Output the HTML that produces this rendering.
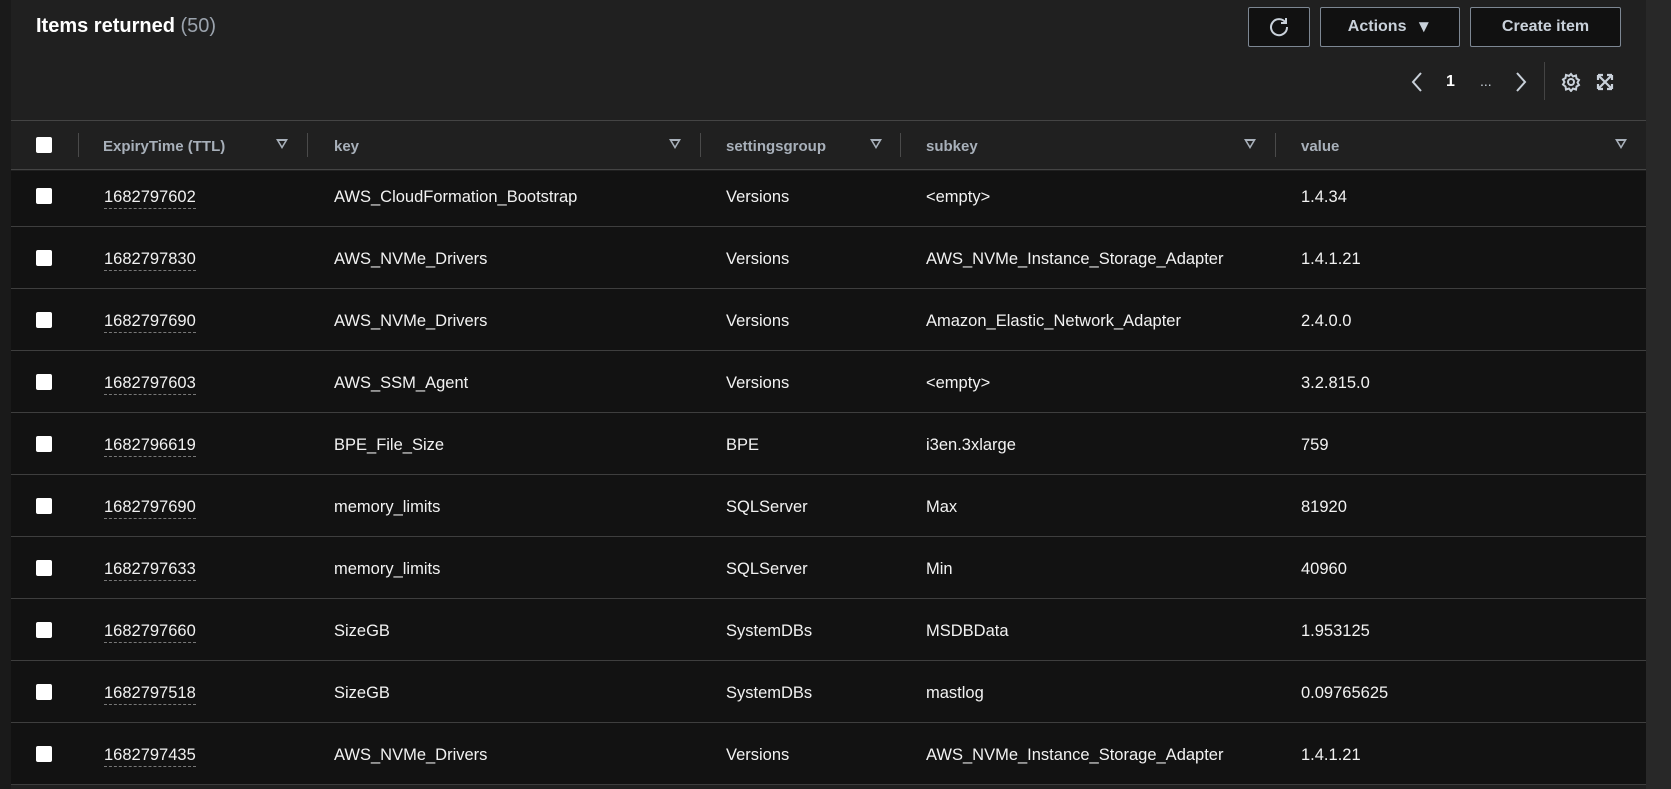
<!DOCTYPE html>
<html><head><meta charset="utf-8"><style>
*{margin:0;padding:0;box-sizing:border-box}
body{width:1671px;height:789px;overflow:hidden;background:#1a1a1a;font-family:"Liberation Sans",sans-serif;position:relative}
#panel{position:absolute;left:11px;top:0;width:1635px;height:789px;background:#202020}
#right{position:absolute;left:1646px;top:0;width:25px;height:789px;background:#282828}
.t{position:absolute;white-space:nowrap}
h1{position:absolute;left:36px;top:15px;font-size:20px;font-weight:bold;color:#fff}
h1 span{font-weight:normal;color:#9ba3ad}
.btn{position:absolute;top:7px;height:40px;border:1px solid #7d8793;border-radius:2px;background:#111;color:#c9d1da;font-weight:bold;font-size:16px;display:flex;align-items:center;justify-content:center}
.hdr{position:absolute;left:11px;top:120px;width:1635px;height:50px;border-top:1px solid #444;border-bottom:1px solid #444}
.hd{position:absolute;top:138px;font-size:15px;font-weight:bold;color:#a8b0ba}
.div{position:absolute;top:133px;width:1px;height:24px;background:#4a4a4a}
.tri{position:absolute;top:139px;width:0;height:0;border-left:6px solid transparent;border-right:6px solid transparent;border-top:10px solid #a8b0ba}
.tri:after{content:"";position:absolute;left:-3px;top:-8px;border-left:3px solid transparent;border-right:3px solid transparent;border-top:5px solid #202020}
.row{position:absolute;left:11px;width:1635px;background:#121212;border-bottom:1px solid #3e3e3e}
.cb{position:absolute;left:36px;width:16px;height:16px;background:#fff;border-radius:2px}
.c{position:absolute;font-size:16.5px;color:#f2f2f2;white-space:nowrap;margin-top:2px}
.n{border-bottom:1px dashed #777;padding-bottom:1px}
</style></head><body>
<div id="panel"></div><div id="right"></div>
<h1>Items returned <span>(50)</span></h1>
<div class="btn" style="left:1248px;width:62px"><svg width="22" height="22" viewBox="0 0 22 22" fill="none" stroke="#c9d1da" stroke-width="2"><path d="M17.5 6.5A8 8 0 1 0 19 11"/><path d="M18 2v5h-5"/></svg></div>
<div class="btn" style="left:1320px;width:140px">Actions&nbsp;&nbsp;<span style="font-size:17px">▼</span></div>
<div class="btn" style="left:1470px;width:151px">Create item</div>
<svg class="t" style="left:1410px;top:71px" width="14" height="22" viewBox="0 0 14 22" fill="none" stroke="#c9d1da" stroke-width="2"><path d="M11 2L3 11l8 9"/></svg>
<div class="t" style="left:1446px;top:73px;font-size:16px;font-weight:bold;color:#fff">1</div>
<div class="t" style="left:1480px;top:73px;font-size:14px;color:#c9d1da">...</div>
<svg class="t" style="left:1514px;top:71px" width="14" height="22" viewBox="0 0 14 22" fill="none" stroke="#c9d1da" stroke-width="2"><path d="M3 2l8 9-8 9"/></svg>
<div class="t" style="left:1544px;top:62px;width:1px;height:38px;background:#444"></div>
<svg class="t" style="left:1561px;top:72px" width="20" height="20" viewBox="0 0 20 20" fill="none" stroke="#c9d1da" stroke-width="2"><circle cx="10" cy="10" r="3"/><path d="M10 2l2 2.5 3-1 .5 3 2.5 1.5-1.5 2.5 1.5 2.5-2.5 1.5-.5 3-3-1-2 2.5-2-2.5-3 1-.5-3L2 12.5 3.5 10 2 7.5 4.5 6l.5-3 3 1z"/></svg>
<svg class="t" style="left:1596px;top:73px" width="18" height="18" viewBox="0 0 18 18" fill="none" stroke="#c9d1da" stroke-width="2.2"><path d="M2 2l14 14M16 2L2 16M2 2h5M2 2v5M16 2h-5M16 2v5M2 16h5M2 16v-5M16 16h-5M16 16v-5"/></svg>
<div class="hdr"></div>
<div class="cb" style="top:137px"></div>
<div class="div" style="left:78px"></div><div class="div" style="left:307px"></div><div class="div" style="left:700px"></div><div class="div" style="left:900px"></div><div class="div" style="left:1275px"></div>
<div class="hd" style="left:103px">ExpiryTime (TTL)</div><div class="tri" style="left:276px"></div>
<div class="hd" style="left:334px">key</div><div class="tri" style="left:669px"></div>
<div class="hd" style="left:726px">settingsgroup</div><div class="tri" style="left:870px"></div>
<div class="hd" style="left:926px">subkey</div><div class="tri" style="left:1244px"></div>
<div class="hd" style="left:1301px">value</div><div class="tri" style="left:1615px"></div>
<div class="row" style="top:171px;height:56px"></div>
<div class="row" style="top:227px;height:62px"></div>
<div class="row" style="top:289px;height:62px"></div>
<div class="row" style="top:351px;height:62px"></div>
<div class="row" style="top:413px;height:62px"></div>
<div class="row" style="top:475px;height:62px"></div>
<div class="row" style="top:537px;height:62px"></div>
<div class="row" style="top:599px;height:62px"></div>
<div class="row" style="top:661px;height:62px"></div>
<div class="row" style="top:723px;height:62px"></div>

<div class="cb" style="top:188px"></div><div class="c n" style="left:104px;top:186px">1682797602</div><div class="c" style="left:334px;top:186px">AWS_CloudFormation_Bootstrap</div><div class="c" style="left:726px;top:186px">Versions</div><div class="c" style="left:926px;top:186px">&lt;empty&gt;</div><div class="c" style="left:1301px;top:186px">1.4.34</div>
<div class="cb" style="top:250px"></div><div class="c n" style="left:104px;top:248px">1682797830</div><div class="c" style="left:334px;top:248px">AWS_NVMe_Drivers</div><div class="c" style="left:726px;top:248px">Versions</div><div class="c" style="left:926px;top:248px">AWS_NVMe_Instance_Storage_Adapter</div><div class="c" style="left:1301px;top:248px">1.4.1.21</div>
<div class="cb" style="top:312px"></div><div class="c n" style="left:104px;top:310px">1682797690</div><div class="c" style="left:334px;top:310px">AWS_NVMe_Drivers</div><div class="c" style="left:726px;top:310px">Versions</div><div class="c" style="left:926px;top:310px">Amazon_Elastic_Network_Adapter</div><div class="c" style="left:1301px;top:310px">2.4.0.0</div>
<div class="cb" style="top:374px"></div><div class="c n" style="left:104px;top:372px">1682797603</div><div class="c" style="left:334px;top:372px">AWS_SSM_Agent</div><div class="c" style="left:726px;top:372px">Versions</div><div class="c" style="left:926px;top:372px">&lt;empty&gt;</div><div class="c" style="left:1301px;top:372px">3.2.815.0</div>
<div class="cb" style="top:436px"></div><div class="c n" style="left:104px;top:434px">1682796619</div><div class="c" style="left:334px;top:434px">BPE_File_Size</div><div class="c" style="left:726px;top:434px">BPE</div><div class="c" style="left:926px;top:434px">i3en.3xlarge</div><div class="c" style="left:1301px;top:434px">759</div>
<div class="cb" style="top:498px"></div><div class="c n" style="left:104px;top:496px">1682797690</div><div class="c" style="left:334px;top:496px">memory_limits</div><div class="c" style="left:726px;top:496px">SQLServer</div><div class="c" style="left:926px;top:496px">Max</div><div class="c" style="left:1301px;top:496px">81920</div>
<div class="cb" style="top:560px"></div><div class="c n" style="left:104px;top:558px">1682797633</div><div class="c" style="left:334px;top:558px">memory_limits</div><div class="c" style="left:726px;top:558px">SQLServer</div><div class="c" style="left:926px;top:558px">Min</div><div class="c" style="left:1301px;top:558px">40960</div>
<div class="cb" style="top:622px"></div><div class="c n" style="left:104px;top:620px">1682797660</div><div class="c" style="left:334px;top:620px">SizeGB</div><div class="c" style="left:726px;top:620px">SystemDBs</div><div class="c" style="left:926px;top:620px">MSDBData</div><div class="c" style="left:1301px;top:620px">1.953125</div>
<div class="cb" style="top:684px"></div><div class="c n" style="left:104px;top:682px">1682797518</div><div class="c" style="left:334px;top:682px">SizeGB</div><div class="c" style="left:726px;top:682px">SystemDBs</div><div class="c" style="left:926px;top:682px">mastlog</div><div class="c" style="left:1301px;top:682px">0.09765625</div>
<div class="cb" style="top:746px"></div><div class="c n" style="left:104px;top:744px">1682797435</div><div class="c" style="left:334px;top:744px">AWS_NVMe_Drivers</div><div class="c" style="left:726px;top:744px">Versions</div><div class="c" style="left:926px;top:744px">AWS_NVMe_Instance_Storage_Adapter</div><div class="c" style="left:1301px;top:744px">1.4.1.21</div>
</body></html>
